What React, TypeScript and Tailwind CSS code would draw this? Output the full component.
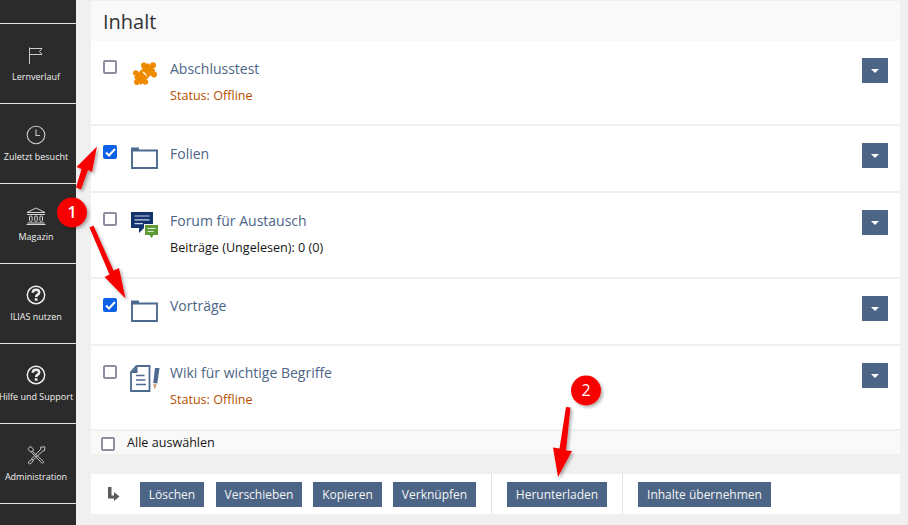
import React from "react";

const F = { fontFamily: '"Open Sans", "Liberation Sans", sans-serif' };

function Flag() {
  return (
    <svg width="16" height="18" viewBox="0 0 16 18" fill="none" stroke="#c9c9c9" strokeWidth="1">
      <path d="M1.5 0.5V17" />
      <path d="M2 1.5H14L11.5 4.5L14 7.5H2" />
    </svg>
  );
}
function Clock() {
  return (
    <svg width="20" height="20" viewBox="0 0 20 20" fill="none" stroke="#c9c9c9" strokeWidth="1.1">
      <circle cx="10" cy="10" r="8.8" />
      <path d="M10 4.5V10.5H14" />
    </svg>
  );
}
function Bank() {
  return (
    <svg width="20" height="18" viewBox="0 0 20 18" fill="none" stroke="#d4d4d4" strokeWidth="1">
      <path d="M1 5.5L10 1L19 5.5Z" />
      <path d="M1 7.5H19" />
      <rect x="3.5" y="9" width="2.6" height="5.5" rx="1" />
      <rect x="8.7" y="9" width="2.6" height="5.5" rx="1" />
      <rect x="13.9" y="9" width="2.6" height="5.5" rx="1" />
      <path d="M1.5 16H18.5M0.5 17.5H19.5" />
    </svg>
  );
}
function Help() {
  return (
    <svg width="20" height="20" viewBox="0 0 20 20" fill="none" stroke="#ececec">
      <circle cx="10" cy="10" r="8.7" strokeWidth="1.5" />
      <path d="M6.8 7.8C6.8 5.7 8.3 4.8 10 4.8C11.9 4.8 13.2 6 13.2 7.5C13.2 9.7 10.1 9.6 10.1 12" strokeWidth="2.5" />
      <path d="M10.1 13.2V15.8" strokeWidth="2.7" />
    </svg>
  );
}
function Tools() {
  return (
    <svg width="19" height="19" viewBox="0 0 19 19" fill="none" stroke="#c4c4c4" strokeWidth="1" strokeLinejoin="round">
      <path d="M1.2 3.6L3.6 6L6 5.4L6.4 3L4 0.8C2.4 0.6 1 2 1.2 3.6Z" />
      <path d="M5.6 5.6L16.2 15.2C17.4 16.4 15.8 18 14.6 16.8L4.4 6.4" />
      <path d="M13.6 1.2L17.8 0.8L17.6 4.6L15.8 5L6 14.2L4.6 12.8L13.8 3.2Z" />
      <path d="M5.6 13L2 15.4L1.2 17L2.6 18L4.4 17L6.6 14" />
    </svg>
  );
}

function NavItem({ icon, label }: { icon: React.ReactNode; label: string }) {
  return (
    <div className="h-[80px] border-b border-[#e4e4e4] flex flex-col items-center pr-[4px] shrink-0">
      <div className="h-[42px] flex items-end justify-center w-full pb-[1px]">{icon}</div>
      <div className="mt-[4px] text-[9px] leading-[14px] text-[#f0f0f0] whitespace-nowrap">{label}</div>
    </div>
  );
}

function Box({ checked, className = "" }: { checked?: boolean; className?: string }) {
  return checked ? (
    <span className={"w-[14px] h-[14px] rounded-[2px] bg-[#0b62e6] flex items-center justify-center shrink-0 " + className}>
      <svg width="11" height="9" viewBox="0 0 11 9" fill="none" stroke="#fff" strokeWidth="2">
        <path d="M1 4.5L4 7.5L10 1" />
      </svg>
    </span>
  ) : (
    <span className={"w-[14px] h-[14px] rounded-[2px] border-2 border-[#8f8d9f] bg-white block shrink-0 " + className} />
  );
}

function Puzzle() {
  return (
    <svg width="24" height="23" viewBox="0 0 24 23" className="ml-[2px]">
      <g fill="#ee8a00">
        <path d="M15 1L22.5 8.5L15.5 15.5L8 8Z" />
        <path d="M8 8L15.5 15.5L8 23L0.8 15.2Z" />
        <circle cx="11" cy="3.4" r="3" />
        <circle cx="20" cy="3.2" r="3" />
        <circle cx="21" cy="12.6" r="3" />
        <circle cx="2.8" cy="11" r="2.8" />
        <circle cx="4" cy="20" r="3" />
        <circle cx="12.4" cy="20" r="2.8" />
      </g>
      <path d="M10 10L13.4 13.4" stroke="#fff" strokeWidth="1.3" />
    </svg>
  );
}
function Folder() {
  return (
    <svg width="27" height="22" viewBox="0 0 27 22" fill="none">
      <path d="M1 3.5H26V21H1Z" stroke="#4d6a91" strokeWidth="1.9" />
      <path d="M0 0.5H8V4H0Z" fill="#4d6a91" />
    </svg>
  );
}
function Forum() {
  return (
    <svg width="27" height="26" viewBox="0 0 27 26">
      <path d="M0 0H22V16H13L8 21V16H0Z" fill="#12336e" />
      <path d="M3.5 4H18.5M3.5 7.8H18.5M3.5 11.6H12" stroke="#c9d6ec" strokeWidth="1.2" />
      <path d="M13 12H27V24H22L20 26L18 24H13Z" fill="#fff" />
      <path d="M14 13H27V23H22.5L20.5 26L18.5 23H14Z" fill="#5e9a35" />
      <path d="M16.5 16.5H24.5M16.5 19.5H22.5" stroke="#dcedcf" strokeWidth="1.1" />
    </svg>
  );
}
function Wiki() {
  return (
    <svg width="30" height="27" viewBox="0 0 30 27" fill="none" className="-ml-[1px]">
      <path d="M6.5 1H19.5V26H1V7Z" stroke="#4d6a91" strokeWidth="1.8" fill="#fff" />
      <path d="M1 8H7.5V1Z" fill="#4d6a91" />
      <path d="M6 10.5H14.5M6 15H15.5M6 19.5H16" stroke="#4d6a91" strokeWidth="1.6" />
      <path d="M25 3H29.5L27.3 18.5L23.2 18Z" fill="#4d6a91" />
      <path d="M23.2 19L27 19.5L24.4 24.5Z" fill="#c7a271" />
    </svg>
  );
}

function Caret() {
  return (
    <button className="w-[26px] h-[25px] bg-[#4c6586] flex items-center justify-center shrink-0">
      <svg width="8" height="4" viewBox="0 0 8 4">
        <path d="M0 0H8L4 4Z" fill="#fff" />
      </svg>
    </button>
  );
}

function Row({
  h,
  checked,
  icon,
  title,
  iconTop,
  titleTop = "pt-[1px]",
  children,
}: {
  h: string;
  checked?: boolean;
  icon: React.ReactNode;
  title: string;
  iconTop: string;
  titleTop?: string;
  children?: React.ReactNode;
}) {
  return (
    <div className={"bg-white flex items-start pl-[12px] pr-[12px] pt-[17px] border-b-2 border-[#f0f0f0] " + h}>
      <Box checked={checked} className="mt-[2px]" />
      <div className={"w-[53px] pl-[14px] shrink-0 " + iconTop}>{icon}</div>
      <div className={"flex-1 min-w-0 " + titleTop}>
        <div className="text-[14px] leading-[20px] text-[#4c6586]">{title}</div>
        {children}
      </div>
      <Caret />
    </div>
  );
}

function Btn({ w, label }: { w: string; label: string }) {
  return (
    <button className={"h-[25px] bg-[#4c6586] text-[#f4f4f4] text-[12px] leading-[25px] text-center whitespace-nowrap shrink-0 " + w}>
      {label}
    </button>
  );
}

function Sep() {
  return <div className="w-[1px] h-[40px] bg-[#e2e2e2] shrink-0" />;
}

export default function App() {
  return (
    <div className="relative w-[908px] h-[525px] overflow-hidden bg-[#f0f0f0] flex" style={F}>
      <aside className="w-[76px] h-full bg-[#2b2b2b] shrink-0 flex flex-col">
        <div className="h-[24px] border-b border-[#e4e4e4] shrink-0" />
        <NavItem icon={<Flag />} label="Lernverlauf" />
        <NavItem icon={<Clock />} label="Zuletzt besucht" />
        <NavItem icon={<Bank />} label="Magazin" />
        <NavItem icon={<Help />} label="ILIAS nutzen" />
        <NavItem icon={<Help />} label="Hilfe und Support" />
        <NavItem icon={<Tools />} label="Administration" />
      </aside>

      <main className="w-[809px] ml-[15px] pt-[1px] shrink-0">
        <div className="h-[40px] bg-[#f9f9f9] pl-[12px] text-[20px] leading-[42px] text-[#333]">Inhalt</div>

        <Row h="h-[85px]" icon={<Puzzle />} title="Abschlusstest" iconTop="pt-[4px]">
          <div className="mt-[8px] text-[12.6px] leading-[18px] text-[#b54f00]">Status: Offline</div>
        </Row>
        <Row h="h-[67px]" checked icon={<Folder />} title="Folien" iconTop="pt-[4px]" />
        <Row h="h-[86px]" icon={<Forum />} title="Forum für Austausch" iconTop="pt-[2px]">
          <div className="mt-[8px] text-[12.6px] leading-[18px] text-[#161616]">Beiträge (Ungelesen): 0 (0)</div>
        </Row>
        <Row h="h-[67px]" checked icon={<Folder />} title="Vorträge" iconTop="pt-[4px]" titleTop="pt-0" />
        <Row h="h-[85px]" icon={<Wiki />} title="Wiki für wichtige Begriffe" iconTop="pt-[2px]" titleTop="pt-0">
          <div className="mt-[8px] text-[12.6px] leading-[18px] text-[#b54f00]">Status: Offline</div>
        </Row>

        <div className="h-[23px] bg-[#f9f9f9] flex items-center pl-[10px]">
          <Box className="mt-[3px]" />
          <span className="ml-[12px] text-[12.6px] leading-[18px] text-[#161616]">Alle auswählen</span>
        </div>

        <div className="mt-[20px] h-[40px] bg-white flex items-center">
          <div className="w-[49px] pl-[17px] shrink-0 flex items-center">
            <svg width="12" height="14" viewBox="0 0 12 14">
              <path d="M0 0H3.5V8.5H6V5L11.5 9.5L6 14V11.5H0Z" fill="#5c5c5c" />
            </svg>
          </div>
          <div className="flex items-center">
            <Btn w="w-[64px]" label="Löschen" />
            <div className="ml-[12px] flex gap-[11px] items-center">
              <Btn w="w-[86px]" label="Verschieben" />
              <Btn w="w-[69px]" label="Kopieren" />
              <Btn w="w-[83px]" label="Verknüpfen" />
            </div>
          </div>
          <div className="ml-[15px]"><Sep /></div>
          <div className="ml-[15px]"><Btn w="w-[100px]" label="Herunterladen" /></div>
          <div className="ml-[15px]"><Sep /></div>
          <div className="ml-[15px]"><Btn w="w-[133px]" label="Inhalte übernehmen" /></div>
        </div>
      </main>

      {/* Annotation overlay */}
      <svg className="absolute left-0 top-0 pointer-events-none" width="908" height="525" viewBox="0 0 908 525">
        <defs>
          <filter id="s" x="-30%" y="-30%" width="160%" height="160%">
            <feDropShadow dx="2" dy="2" stdDeviation="1.5" floodColor="#000" floodOpacity="0.3" />
          </filter>
        </defs>
        <g fill="#f70000" filter="url(#s)">
          <path d="M76 187.5L81 189.5L88 170L92 172L97 146.5L76.5 167L81.5 169Z" />
          <path d="M89.5 227.5L93.5 225.5L113.5 270.5L119 268L125.5 298.5L104.5 277L109.5 274.5Z" />
          <path d="M566 407L570.5 407.5L566 450.5L572 451L558 477L553 447.5L559.5 448.5Z" />
          <circle cx="72" cy="212.5" r="15" />
          <circle cx="586" cy="390.5" r="15" />
        </g>
      </svg>
      <span className="absolute left-[64px] top-[201px] w-[16px] text-center text-[16px] leading-[22px] font-semibold text-white">1</span>
      <span className="absolute left-[578px] top-[379px] w-[16px] text-center text-[16px] leading-[22px] text-white">2</span>
    </div>
  );
}
